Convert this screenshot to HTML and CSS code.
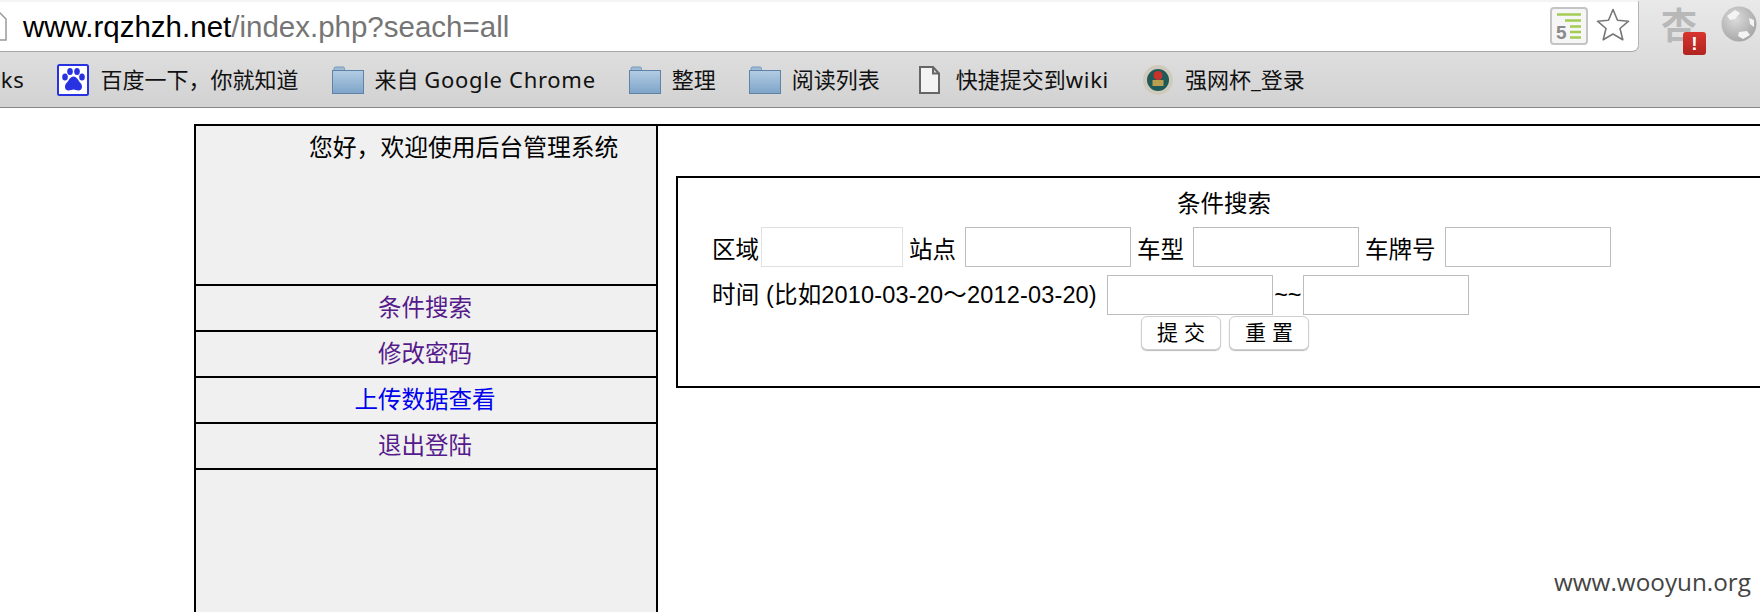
FILE: index.html
```html
<!DOCTYPE html>
<html lang="zh-CN">
<head>
<meta charset="utf-8">
<title>后台管理系统</title>
<link rel="stylesheet" href="styles.css">
</head>
<body>
<header class="chrome">
  <div class="toprow">
    <div class="address">
      <svg class="pageicon" width="12" height="30" viewBox="0 0 12 30"><path d="M-12 1H0L6 7V28H-12Z" fill="#fff" stroke="#999" stroke-width="1.5"/></svg>
      <span class="url"><span class="host">www.rqzhzh.net</span>/index.php?seach=all</span>
      <svg class="ext5" width="38" height="38" viewBox="0 0 38 38"><rect x="1" y="1" width="36" height="36" rx="3" fill="#f6f6f6" stroke="#c4c4c4" stroke-width="2"/><path d="M7 7.500H31M15 13.500H31M20 19.500H31M20 25H31M20 30.500H31" stroke="#a3cc55" stroke-width="2.500"/><text x="6" y="32" class="five">5</text></svg>
      <svg class="star" width="36" height="36" viewBox="0 0 36 36"><path d="M18 2.500L22.500 13.200L33.500 14.200L25 21.500L27.800 32.800L18 27L8.200 32.800L11 21.500L2.500 14.200L13.500 13.200Z" fill="#fff" stroke="#777" stroke-width="1.600" stroke-linejoin="round"/></svg>
    </div>
    <div class="exts">
      <div class="apricot"><span class="apricot-char">杏</span><span class="badge">!</span></div>
      <svg class="globe" width="36" height="36" viewBox="0 0 36 36"><defs><radialGradient id="gl" cx="0.400" cy="0.350" r="0.700"><stop offset="0" stop-color="#dcdcdc"/><stop offset="1" stop-color="#a4a4a4"/></radialGradient></defs><circle cx="18" cy="18" r="17.500" fill="url(#gl)"/><path d="M6 10L14 4L19 7L14 13L9 14ZM18 26L26 25L29 29L22 33L17 30ZM28 12L33 14L33 21L29 18Z" fill="#f4f4f4"/></svg>
    </div>
  </div>
  <nav class="bookmarks">
    <span class="bm first"><span class="bm-text wide">rks</span></span>
    <span class="bm"><svg class="ico" width="32" height="32" viewBox="0 0 32 32"><rect x="1" y="1" width="30" height="30" rx="1.500" fill="#fff" stroke="#2932e1" stroke-width="2"/><g fill="#2932e1"><ellipse cx="8" cy="13" rx="2.800" ry="3.600"/><ellipse cx="13" cy="7.500" rx="2.800" ry="3.600"/><ellipse cx="20" cy="7.500" rx="2.800" ry="3.600"/><ellipse cx="25" cy="13" rx="2.800" ry="3.600"/><path d="M16.500 12.500C20 12.500 21 16.500 23.500 19C26 21.500 25.500 26.500 21.500 26.500C19.500 26.500 18 25.500 16.500 25.500C15 25.500 13.500 26.500 11.500 26.500C7.500 26.500 7 21.500 9.500 19C12 16.500 13 12.500 16.500 12.500Z"/></g></svg><span class="bm-text">百度一下，你就知道</span></span>
    <span class="bm"><svg class="ico" width="32" height="28" viewBox="0 0 32 28"><use href="#folder"/></svg><span class="bm-text">来自 <span class="wide">Google Chrome</span></span></span>
    <span class="bm"><svg class="ico" width="32" height="28" viewBox="0 0 32 28"><use href="#folder"/></svg><span class="bm-text">整理</span></span>
    <span class="bm"><svg class="ico" width="32" height="28" viewBox="0 0 32 28"><use href="#folder"/></svg><span class="bm-text">阅读列表</span></span>
    <span class="bm"><svg class="ico" width="32" height="28" viewBox="0 0 32 28"><path d="M7 1H20L26 7.500V27H7Z M20 1V7.500H26" fill="#f3f3f3" stroke="#666" stroke-width="2"/></svg><span class="bm-text">快捷提交到<span class="wide">wiki</span></span></span>
    <span class="bm"><svg class="ico" width="32" height="30" viewBox="0 0 32 30"><circle cx="16" cy="15" r="15" fill="#cfcabb"/><circle cx="16" cy="15" r="11" fill="#1f5a58"/><circle cx="16" cy="10.500" r="4.500" fill="#c6322c"/><rect x="10.500" y="15" width="11" height="6" fill="#b9a050"/></svg><span class="bm-text">强网杯_登录</span></span>
  </nav>
  <svg class="defs" width="0" height="0"><defs><linearGradient id="fg" x1="0" y1="0" x2="0" y2="1"><stop offset="0" stop-color="#b3cce4"/><stop offset="1" stop-color="#7ea4c8"/></linearGradient><symbol id="folder" viewBox="0 0 32 28"><path d="M2 5V2.500Q2 1 3.500 1H11Q12.500 1 12.500 2.500V5Z" fill="#9dbad6" stroke="#7a9aba"/><rect x="0.500" y="4.500" width="31" height="23" fill="url(#fg)" stroke="#5f83a6"/></symbol></defs></svg>
</header>
<main class="page">
  <aside class="sidebar">
    <div class="welcome">您好，欢迎使用后台管理系统</div>
    <a class="navrow" href="#a">条件搜索</a>
    <a class="navrow" href="#b">修改密码</a>
    <a class="navrow fresh" href="#c">上传数据查看</a>
    <a class="navrow" href="#d">退出登陆</a>
    <div class="rest"></div>
  </aside>
  <section class="content">
    <form class="panel">
      <div class="title">条件搜索</div>
      <div class="row row-one">
        <label class="lab lab-tight">区域</label><input class="field field-short" type="text">
        <label class="lab">站点</label><input class="field" type="text">
        <label class="lab">车型</label><input class="field" type="text">
        <label class="lab">车牌号</label><input class="field" type="text">
      </div>
      <div class="row row-two">
        <label class="lab-time">时间 (比如2010-03-20～2012-03-20)</label><input class="field" type="text"><span class="tilde">~~</span><input class="field" type="text">
      </div>
      <div class="actions">
        <button class="btn" type="button">提 交</button>
        <button class="btn" type="button">重 置</button>
      </div>
    </form>
  </section>
</main>
<div class="watermark">www.wooyun.org</div>
</body>
</html>
```
FILE: styles.css
```css
* { box-sizing: border-box; }
html, body { margin: 0; padding: 0; }
body {
  width: 1760px;
  height: 612px;
  overflow: hidden;
  position: relative;
  background: #fff;
  color: #000;
  font-family: "Liberation Sans", "Noto Sans CJK SC", sans-serif;
}
.defs { position: absolute; }

.chrome {
  height: 108px;
  background: linear-gradient(#e9e9e9, #d2d2d2);
  border-bottom: 1px solid #868686;
}
.toprow { display: flex; height: 52px; }
.address {
  width: 1639px;
  height: 52px;
  display: flex;
  align-items: center;
  background: #fff;
  border-top: 2px solid #f4f4f4;
  border-right: 1px solid #b4b4b4;
  border-bottom: 1px solid #a8a8a8;
  border-bottom-right-radius: 7px;
}
.pageicon { flex: none; }
.url {
  margin-left: 11px;
  font-size: 29.500px;
  color: #757575;
  white-space: nowrap;
  flex: 1;
}
.host { color: #000; }
.ext5 { flex: none; margin-top: -2px; }
.five { font: bold 19px "Liberation Sans", sans-serif; fill: #8a8a8a; }
.star { flex: none; margin: -4px 7px 0 7px; }
.exts { display: flex; align-items: flex-start; padding: 6px 0 0 22px; }
.apricot { position: relative; width: 60px; height: 46px; }
.apricot-char {
  display: block;
  font-size: 36px;
  line-height: 42px;
  font-weight: 700;
  color: #b8b8b8;
}
.badge {
  position: absolute;
  left: 22px;
  top: 26px;
  width: 23px;
  height: 23px;
  border-radius: 3px;
  background: linear-gradient(#d8352f, #b02320);
  color: #fff;
  font-size: 19px;
  font-weight: 700;
  line-height: 23px;
  text-align: center;
}
.globe { flex: none; }

.bookmarks {
  height: 55px;
  display: flex;
  align-items: center;
  gap: 33px;
  white-space: nowrap;
}
.bm { display: flex; align-items: center; gap: 11px; flex: none; }
.first { margin-left: -9px; }
.ico { flex: none; }
.bm-text {
  font-family: "Noto Sans", "Noto Sans CJK SC", sans-serif;
  font-size: 22px;
  line-height: 30px;
  padding-bottom: 2px;
  color: #111;
}
.wide { letter-spacing: 0.700px; }

.page { display: flex; height: 488px; margin-top: 16px; }
.sidebar {
  flex: none;
  width: 464px;
  margin-left: 194px;
  display: flex;
  flex-direction: column;
  background: #f0f0f0;
  border: 2px solid #000;
  border-bottom: 0;
  font-size: 23.500px;
}
.welcome {
  height: 158px;
  padding: 4px 0 0 113px;
  line-height: 36px;
  font-size: 23.800px;
}
.navrow {
  height: 46px;
  border-top: 2px solid #000;
  padding: 0 2px 4px 0;
  display: flex;
  align-items: center;
  justify-content: center;
  color: #551a8b;
  text-decoration: none;
}
.fresh { color: #0000ee; }
.rest { flex: 1; border-top: 2px solid #000; }

.content {
  flex: 1;
  min-width: 0;
  overflow: hidden;
  border-top: 2px solid #000;
  padding: 50px 0 0 18px;
}
.panel {
  width: 1098px;
  height: 212px;
  border: 2px solid #000;
  font-size: 23.500px;
}
.title { height: 49px; line-height: 53px; padding-right: 2px; text-align: center; }
.row { display: flex; align-items: center; height: 40px; padding-left: 34px; }
.row-two { margin-top: 8px; }
.lab { margin: 0 9px 0 6px; padding-top: 1px; white-space: nowrap; }
.lab-tight { margin: 0 2px 0 0; }
.lab-time { margin-right: 10px; padding-bottom: 5px; letter-spacing: 0.170px; white-space: nowrap; }
.tilde { width: 30px; text-align: center; }
.field {
  flex: none;
  width: 166px;
  height: 40px;
  padding: 0;
  border: 1.500px solid #bdbdbd;
  background: #fff;
}
.field-short { width: 142px; border-color: #e0e0e0; }
.actions { display: flex; justify-content: center; gap: 8px; margin-top: 1px; }
.btn {
  width: 80px;
  height: 34px;
  padding: 0;
  background: #fff;
  border: 1px solid #d0d0d0;
  border-radius: 6px;
  box-shadow: 0 1px 1px #bbb;
  font-family: "Liberation Sans", "Noto Sans CJK SC", sans-serif;
  font-size: 21px;
  line-height: 30px;
  color: #000;
}
.watermark {
  position: absolute;
  right: 9px;
  top: 566px;
  font-family: "Open Sans", sans-serif;
  font-size: 24.300px;
  line-height: 32px;
  color: #444;
}
```
